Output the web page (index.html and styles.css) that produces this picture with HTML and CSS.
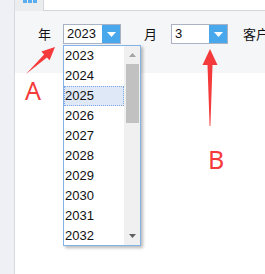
FILE: index.html
```html
<!DOCTYPE html>
<html lang="zh">
<head>
<meta charset="utf-8">
<link rel="stylesheet" href="styles.css">
</head>
<body>
<div class="frame">
  <div class="side"></div>
  <div class="main">
    <div class="tabbar">
      <div class="tab"><i></i><i></i><i></i></div>
    </div>
    <div class="toolbar">
      <div class="row">
        <span class="lbl">年</span>
        <div class="select sel-year">
          <span class="val">2023</span>
          <span class="btn"><svg width="9" height="5" viewBox="0 0 9 5"><path d="M0 0H9L4.5 5Z" fill="#fff"/></svg></span>
        </div>
        <span class="lbl lbl-month">月</span>
        <div class="select sel-month">
          <span class="val">3</span>
          <span class="btn"><svg width="9" height="5" viewBox="0 0 9 5"><path d="M0 0H9L4.5 5Z" fill="#fff"/></svg></span>
        </div>
        <span class="lbl lbl-cust">客户</span>
      </div>
    </div>
    <div class="content"></div>
  </div>
</div>

<div class="dropdown">
  <ul class="items">
    <li>2023</li>
    <li>2024</li>
    <li class="hover">2025</li>
    <li>2026</li>
    <li>2027</li>
    <li>2028</li>
    <li>2029</li>
    <li>2030</li>
    <li>2031</li>
    <li>2032</li>
  </ul>
  <div class="scroll">
    <span class="up"><svg width="7" height="4" viewBox="0 0 7 4"><path d="M0 4H7L3.5 0Z" fill="#a3a3a3"/></svg></span>
    <span class="thumb"></span>
    <span class="down"><svg width="7" height="4" viewBox="0 0 7 4"><path d="M0 0H7L3.5 4Z" fill="#606060"/></svg></span>
  </div>
</div>

<svg class="marks" width="265" height="274" viewBox="0 0 265 274">
  <polygon points="26,74 46.9,57.4 49.6,60.3 55,47 41.4,51.5 44.1,54.4" fill="#f43a3a"/>
  <polygon points="210,49 217.5,65 212.5,65 210.4,126 209.6,126 207.5,65 202.5,65" fill="#f43a3a"/>
  <text x="25" y="100" class="mark-letter">A</text>
  <text x="208" y="169" class="mark-letter">B</text>
</svg>
</body>
</html>
```

FILE: styles.css
```css
html, body {
  margin: 0;
  padding: 0;
}
body {
  width: 265px;
  height: 274px;
  overflow: hidden;
  position: relative;
  background: #fff;
  font-family: "Liberation Sans", "Noto Sans CJK SC", sans-serif;
  font-size: 13px;
  color: #111;
}
.frame {
  display: flex;
  height: 274px;
}
.side {
  flex: 0 0 14px;
  width: 14px;
  background: #eef0f5;
  border-right: 1px solid #d5d9e0;
}
.main {
  flex: 1;
  min-width: 0;
  overflow: hidden;
  display: flex;
  flex-direction: column;
}
.tabbar {
  height: 10px;
  flex: 0 0 10px;
  border-bottom: 1px solid #d3d6dc;
  display: flex;
}
.tab {
  width: 29px;
  height: 11px;
  background: #ebecee;
  border-right: 1px solid #d3d6dc;
  display: flex;
  gap: 1px;
  padding-left: 8px;
  box-sizing: border-box;
}
.tab i {
  display: block;
  width: 4px;
  height: 3px;
  background: #5aaef0;
}
.toolbar {
  height: 62px;
  flex: 0 0 62px;
  background: #f5f6f8;
  padding: 13px 0 0 23px;
  box-sizing: border-box;
}
.row {
  display: flex;
  align-items: center;
  height: 20px;
  white-space: nowrap;
}
.row > * {
  flex-shrink: 0;
}
.lbl {
  font-family: "Noto Sans CJK SC", sans-serif;
  font-size: 13px;
  color: #111;
  line-height: 20px;
}
.select {
  display: flex;
  height: 20px;
  box-sizing: border-box;
  border: 1px solid #aab3c3;
  background: #fff;
}
.sel-year {
  width: 58px;
  margin-left: 12px;
}
.sel-month {
  width: 57px;
  margin-left: 14px;
}
.lbl-month {
  margin-left: 23px;
}
.lbl-cust {
  margin-left: 15px;
}
.val {
  flex: 1;
  padding-left: 3px;
  line-height: 18px;
  font-size: 13px;
}
.btn {
  width: 18px;
  background: #49a8ec;
  display: flex;
  align-items: center;
  justify-content: center;
}
.content {
  flex: 1;
  background: #fff;
}
.dropdown {
  position: absolute;
  left: 63px;
  top: 45px;
  width: 78px;
  height: 201px;
  box-sizing: border-box;
  border: 1px solid #84b3e6;
  background: #fff;
  display: flex;
  box-shadow: 2px 2px 3px rgba(0, 0, 0, 0.28);
  overflow: hidden;
}
.items {
  list-style: none;
  margin: 0;
  padding: 0;
  width: 60px;
}
.items li {
  height: 20px;
  line-height: 20px;
  padding-left: 1px;
  box-sizing: border-box;
  font-size: 13px;
}
.items li.hover {
  background: #dfe8f7;
  outline: 1px dotted #7ea6e6;
  outline-offset: -1px;
}
.scroll {
  flex: 1;
  background: #f0f0f0;
  display: flex;
  flex-direction: column;
  align-items: center;
  padding: 7px 0 0 1px;
}
.up {
  display: flex;
  height: 10px;
}
.thumb {
  width: 13px;
  height: 59px;
  background: #c1c1c1;
  margin-top: 1px;
}
.down {
  display: flex;
  margin-top: auto;
  margin-bottom: 7px;
}
.marks {
  position: absolute;
  left: 0;
  top: 0;
  pointer-events: none;
}
.mark-letter {
  font-family: "Noto Sans", sans-serif;
  font-size: 25px;
  fill: #f43a3a;
}
```
